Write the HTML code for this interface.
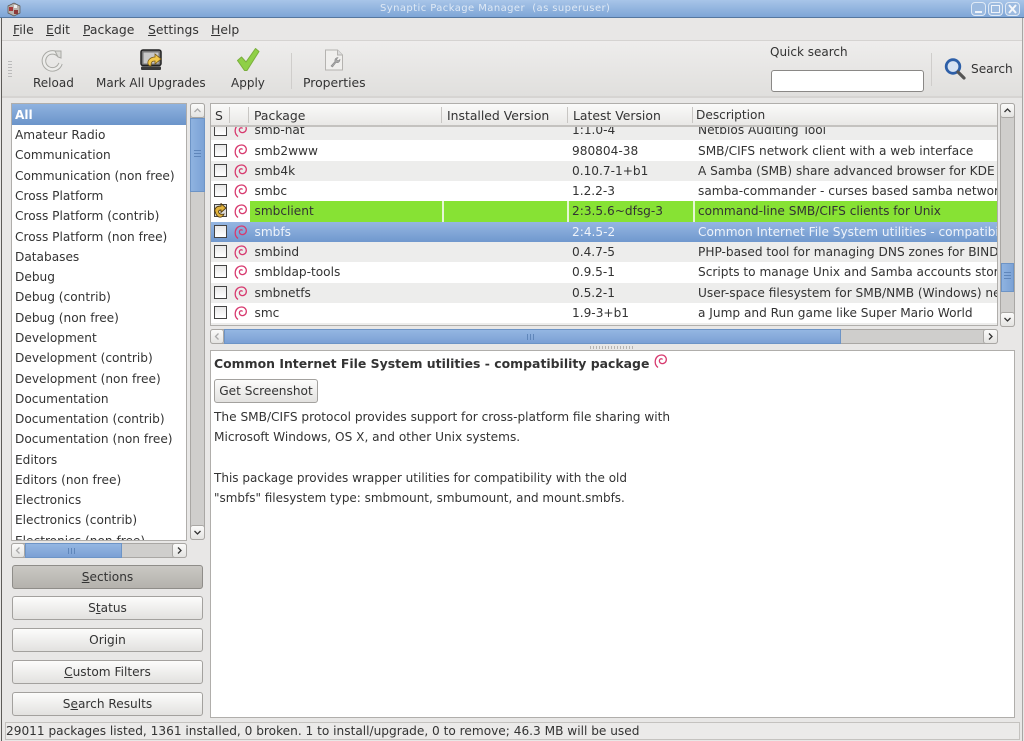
<!DOCTYPE html>
<html><head><meta charset="utf-8"><style>
html,body{margin:0;padding:0;background:#e8e7e6}
#w{position:relative;width:1024px;height:741px;overflow:hidden;background:#e8e7e6;font:12.15px/20px "DejaVu Sans",sans-serif;color:#333;filter:blur(.3px)}
#w div,#w svg{position:absolute;box-sizing:border-box}
.t{white-space:nowrap}
u{text-decoration:underline}
.m{font-size:12.4px}
.tb{font-size:12px}
.sb{border:1px solid #a9a7a4;background:#cfcecc;border-radius:3px}
.th{background:linear-gradient(90deg,#8fb3e0,#7ba2d6);border:1px solid #6d94c6}
.thh{background:linear-gradient(#94b6e2,#7ba0d4);border:1px solid #6d94c6}
.ab{background:linear-gradient(#fbfbfa,#e4e3e1);border:1px solid #a9a7a4;border-radius:3px}
.btn{left:12px;width:191px;height:24px;border:1px solid #a3a19e;border-radius:3px;background:linear-gradient(#fcfcfb,#e2e1df);text-align:center;line-height:23px}
.sec{left:0;width:174px;height:20px;padding-left:3px;line-height:22px}
.r{left:0;width:787px;height:20.3px;line-height:20px}
.c{width:13px;height:13px;left:3px;top:3px;border:1px solid #444;background:linear-gradient(#e8e8e8,#fff)}
.p{left:43.5px}.v{left:361px}.d{left:487px;width:300px;overflow:hidden}
.sw{left:22px;top:2px;width:15px;height:16px}
.h{top:0;line-height:23px;font-size:12.4px}
.s{top:3px;width:1px;height:16px;background:#c8c6c3}
</style></head><body><div id="w">
<svg width="0" height="0" style="display:none"><defs><symbol id="sw" viewBox="0 0 15 16"><path d="M5 14.5C2.500 12.500 1.800 9.500 2.400 7 3.200 3.500 6 2 8.500 2 11.500 2 13.500 4.200 13.300 7 13 9.700 10.500 11 8.500 10.500 6.500 10 5.800 8 6.800 6.500 7.500 5.500 9 5.500 9.500 6.500" fill="none" stroke="#d7396e" stroke-width="1.300"/></symbol></defs></svg>

<!-- window frame + title -->
<div style="left:0;top:0;width:1024px;height:18px;background:linear-gradient(#a8c5e8,#7ea5d6);border-bottom:1px solid #55779f"></div>
<svg style="left:6px;top:2px" width="16" height="15" viewBox="0 0 16 15"><path d="M2 4l6-3 6 3v7l-6 3-6-3z" fill="#b9b4ae" stroke="#5a5450" stroke-width=".7"/><rect x="3" y="5" width="4" height="4" fill="#a83a3a"/><rect x="8" y="8" width="4" height="4" fill="#8b3a3a"/><rect x="8" y="3" width="3" height="3" fill="#eee"/></svg>
<div class="t" style="left:380px;top:0;height:18px;line-height:18px;font-size:10px;letter-spacing:.42px;color:#dfe9f5">Synaptic Package Manager&nbsp; (as superuser)</div>
<div style="left:971px;top:2px;width:15px;height:14px;border:1px solid #dfe9f5;border-radius:4px;background:#9dbbe0"></div>
<div style="left:975px;top:11px;width:7px;height:2px;background:#eef3fa"></div>
<div style="left:988px;top:2px;width:15px;height:14px;border:1px solid #dfe9f5;border-radius:4px;background:#9dbbe0"></div>
<div style="left:991px;top:5px;width:9px;height:8px;border:1px solid #eef3fa"></div>
<div style="left:1005px;top:2px;width:15px;height:14px;border:1px solid #dfe9f5;border-radius:4px;background:#9dbbe0"></div>
<svg style="left:1005px;top:2px" width="15" height="14"><path d="M4 3l7 8M11 3l-7 8" stroke="#f4f7fb" stroke-width="2"/></svg>
<div style="left:1px;top:18px;width:1px;height:723px;background:#5d5b58"></div>
<div style="left:1022px;top:18px;width:1px;height:723px;background:#a8a6a3"></div>

<!-- menu -->
<div class="t m" style="left:13px;top:20px"><u>F</u>ile</div>
<div class="t m" style="left:46px;top:20px"><u>E</u>dit</div>
<div class="t m" style="left:83px;top:20px"><u>P</u>ackage</div>
<div class="t m" style="left:148px;top:20px"><u>S</u>ettings</div>
<div class="t m" style="left:211px;top:20px"><u>H</u>elp</div>

<!-- toolbar -->
<div style="left:2px;top:40px;width:1020px;height:58px;background:linear-gradient(#eeedec,#e0dfdd);border-top:1px solid #d5d3d1;border-bottom:2px solid #d6d4d2"></div>
<div style="left:8px;top:61px;width:4px;height:16px;background:repeating-linear-gradient(#bbb 0 1px,transparent 1px 3px)"></div>
<svg style="left:41px;top:48px" width="24" height="24" viewBox="0 0 24 24"><path d="M18 7.500A8.500 8.500 0 1 0 19.500 15.500" fill="none" stroke="#a8a8a4" stroke-width="4.500"/><path d="M18 7.500A8.500 8.500 0 1 0 19.500 15.500" fill="none" stroke="#ececea" stroke-width="2.600"/><path d="M14 3l6 0 0 7-3-1z" fill="#dcdcd9" stroke="#a8a8a4"/></svg>
<svg style="left:140px;top:49px" width="23" height="22" viewBox="0 0 23 22"><rect x="1" y="1" width="20" height="15.500" rx="2" fill="#777" stroke="#222" stroke-width="1.500"/><rect x="3.500" y="3.500" width="15" height="11" fill="#c9c9c9"/><rect x="1" y="17.500" width="20" height="3.500" rx="1" fill="#3a3a3a"/><path d="M8 15c-1-4 3-7 7-7V5l6 5-6 5v-3c-3 0-4 1-4 5-2 0-2.500-1-3-2z" fill="#f2c84b" stroke="#7a5a14" stroke-width=".8"/></svg>
<svg style="left:236px;top:47px" width="24" height="25" viewBox="0 0 24 25"><path d="M1.500 13.500l4-3.500 4.500 5L19.500 1.500l3.500 3-12 19h-2.500z" fill="#8fd046" stroke="#7aae3c" stroke-width="1" stroke-linejoin="round"/></svg>
<div style="left:291px;top:53px;width:1px;height:36px;background:#cfcdcb"></div>
<svg style="left:324px;top:49px" width="20" height="22" viewBox="0 0 20 22"><path d="M1.500 1h12l5 5v15h-17z" fill="#f0efed" stroke="#b5b3b0"/><path d="M13.500 1v5h5" fill="#ddd" stroke="#b5b3b0"/><path d="M7 17l4-4.500a3 3 0 0 1 3-4l-1.500 2 1.500 1.500 2-1.500a3 3 0 0 1-4 3l-3.500 4.500z" fill="#aaa" stroke="#888" stroke-width=".6"/></svg>
<div class="t tb" style="left:33px;top:73px">Reload</div>
<div class="t tb" style="left:96px;top:73px">Mark All Upgrades</div>
<div class="t tb" style="left:231px;top:73px">Apply</div>
<div class="t m" style="left:303px;top:73px">Properties</div>
<div class="t tb" style="left:770px;top:42px">Quick search</div>
<div style="left:771px;top:70px;width:153px;height:22px;background:#fff;border:1px solid #8a8886;border-radius:3px"></div>
<div style="left:931px;top:53px;width:1px;height:33px;background:#cfcdcb"></div>
<svg style="left:944px;top:57px" width="22" height="23" viewBox="0 0 22 23"><circle cx="9" cy="9.500" r="6.800" fill="#d6e2f2" stroke="#2d5fa8" stroke-width="2.800"/><path d="M14 15l6 6" stroke="#555" stroke-width="3.200" stroke-linecap="round"/></svg>
<div class="t" style="left:971px;top:59px">Search</div>

<!-- sidebar list -->
<div style="left:11px;top:103px;width:176px;height:438px;border:1px solid #b0aeab;background:#fff;overflow:hidden">
<div class="sec" style="top:0;height:21px;background:linear-gradient(#8fb2df,#6b94c9);color:#fff;font-weight:bold">All</div>
<div class="sec t" style="top:20.3px">Amateur Radio</div>
<div class="sec t" style="top:40.2px">Communication</div>
<div class="sec t" style="top:60.6px">Communication (non free)</div>
<div class="sec t" style="top:81px">Cross Platform</div>
<div class="sec t" style="top:101.3px">Cross Platform (contrib)</div>
<div class="sec t" style="top:121.5px">Cross Platform (non free)</div>
<div class="sec t" style="top:141.9px">Databases</div>
<div class="sec t" style="top:162.2px">Debug</div>
<div class="sec t" style="top:182.4px">Debug (contrib)</div>
<div class="sec t" style="top:202.7px">Debug (non free)</div>
<div class="sec t" style="top:223px">Development</div>
<div class="sec t" style="top:243.2px">Development (contrib)</div>
<div class="sec t" style="top:263.5px">Development (non free)</div>
<div class="sec t" style="top:283.8px">Documentation</div>
<div class="sec t" style="top:304px">Documentation (contrib)</div>
<div class="sec t" style="top:324.3px">Documentation (non free)</div>
<div class="sec t" style="top:344.6px">Editors</div>
<div class="sec t" style="top:364.9px">Editors (non free)</div>
<div class="sec t" style="top:385.1px">Electronics</div>
<div class="sec t" style="top:405.4px">Electronics (contrib)</div>
<div class="sec t" style="top:425.7px">Electronics (non free)</div>
</div>
<!-- sidebar vscroll -->
<div class="sb" style="left:190px;top:103px;width:15px;height:437px"></div>
<div class="ab" style="left:190px;top:103px;width:15px;height:15px"></div>
<svg style="left:190px;top:103px" width="15" height="15"><path d="M4.500 9l3-3 3 3" fill="none" stroke="#aaa" stroke-width="1.300"/></svg>
<div class="th" style="left:190px;top:118px;width:15px;height:74px"></div>
<div style="left:194px;top:150px;width:7px;height:8px;background:repeating-linear-gradient(#5f86ba 0 1px,transparent 1px 3px)"></div>
<div class="ab" style="left:190px;top:525px;width:15px;height:15px"></div>
<svg style="left:190px;top:525px" width="15" height="15"><path d="M4.500 6l3 3 3-3" fill="none" stroke="#333" stroke-width="1.300"/></svg>
<!-- sidebar hscroll -->
<div class="sb" style="left:11px;top:543px;width:176px;height:15px"></div>
<div class="ab" style="left:11px;top:543px;width:14px;height:15px"></div>
<svg style="left:11px;top:543px" width="14" height="15"><path d="M8.500 4.500l-3 3 3 3" fill="none" stroke="#aaa" stroke-width="1.300"/></svg>
<div class="thh" style="left:25px;top:543px;width:97px;height:15px"></div>
<div style="left:68px;top:548px;width:8px;height:6px;background:repeating-linear-gradient(90deg,#5f86ba 0 1px,transparent 1px 3px)"></div>
<div class="ab" style="left:172px;top:543px;width:15px;height:15px"></div>
<svg style="left:172px;top:543px" width="15" height="15"><path d="M6 4.500l3 3-3 3" fill="none" stroke="#333" stroke-width="1.300"/></svg>

<!-- filter buttons -->
<div class="btn" style="top:565px;background:linear-gradient(#c9c7c3,#b4b1ac);border-color:#8f8d89"><u>S</u>ections</div>
<div class="btn" style="top:596px">S<u>t</u>atus</div>
<div class="btn" style="top:628px">Origin</div>
<div class="btn" style="top:660px"><u>C</u>ustom Filters</div>
<div class="btn" style="top:692px">S<u>e</u>arch Results</div>

<!-- package list -->
<div style="left:210px;top:103px;width:788px;height:223px;border:1px solid #b0aeab;background:#fff;overflow:hidden">
<div style="left:0;top:0;width:787px;height:23px;background:linear-gradient(#fafaf9,#e9e8e6);border-bottom:2px solid #c4c2bf;z-index:3">
<div class="t h" style="left:4px">S</div><div class="s" style="left:18px"></div><div class="s" style="left:37px"></div>
<div class="t h" style="left:43px">Package</div><div class="s" style="left:230px"></div>
<div class="t h" style="left:236px">Installed Version</div><div class="s" style="left:356px"></div>
<div class="t h" style="left:362px">Latest Version</div><div class="s" style="left:481px"></div>
<div class="t h" style="left:485px;font-size:12.15px">Description</div>
</div>
<div class="r t" style="top:16.2px;background:#ededec"><div class="c"></div><svg class="sw"><use href="#sw"/></svg><div class="p">smb-nat</div><div class="v">1:1.0-4</div><div class="d">Netbios Auditing Tool</div></div>
<div class="r t" style="top:36.5px;background:#fff"><div class="c"></div><svg class="sw"><use href="#sw"/></svg><div class="p">smb2www</div><div class="v">980804-38</div><div class="d">SMB/CIFS network client with a web interface</div></div>
<div class="r t" style="top:56.8px;background:#ededec"><div class="c"></div><svg class="sw"><use href="#sw"/></svg><div class="p">smb4k</div><div class="v">0.10.7-1+b1</div><div class="d">A Samba (SMB) share advanced browser for KDE</div></div>
<div class="r t" style="top:77.1px;background:#fff"><div class="c"></div><svg class="sw"><use href="#sw"/></svg><div class="p">smbc</div><div class="v">1.2.2-3</div><div class="d">samba-commander - curses based samba network</div></div>
<div class="r t" style="top:97.4px;background:#fff">
<div style="left:39px;top:0;width:748px;height:20.3px;background:#87e234"></div>
<div style="left:231px;top:0;width:2px;height:20.3px;background:#e6f6d4"></div><div style="left:356px;top:0;width:2px;height:20.3px;background:#e6f6d4"></div><div style="left:482px;top:0;width:2px;height:20.3px;background:#e6f6d4"></div>
<div class="c" style="background:#ddd"></div>
<svg style="left:1px;top:2px" width="17" height="16" viewBox="0 0 17 16"><path d="M3 9c-1-4 2-6 6-6V.5l5 4.500-5 4.500V7c-2 0-3 1-2 3 1 1.500 3 1.500 5 1-1 2.500-3 3.500-5 3-2-.5-3-2-4-5.500z" fill="#e2b33c" stroke="#4f3a10" stroke-width=".9"/></svg>
<svg class="sw"><use href="#sw"/></svg><div class="p">smbclient</div><div class="v">2:3.5.6~dfsg-3</div><div class="d">command-line SMB/CIFS clients for Unix</div></div>
<div class="r t" style="top:117.7px;background:linear-gradient(#95b6e1,#7098cd);color:#eef3fa"><div class="c" style="border-color:#444"></div><svg class="sw"><use href="#sw"/></svg><div class="p">smbfs</div><div class="v">2:4.5-2</div><div class="d">Common Internet File System utilities - compatibility package</div></div>
<div class="r t" style="top:138px;background:#ededec"><div class="c"></div><svg class="sw"><use href="#sw"/></svg><div class="p">smbind</div><div class="v">0.4.7-5</div><div class="d">PHP-based tool for managing DNS zones for BIND</div></div>
<div class="r t" style="top:158.2px;background:#fff"><div class="c"></div><svg class="sw"><use href="#sw"/></svg><div class="p">smbldap-tools</div><div class="v">0.9.5-1</div><div class="d">Scripts to manage Unix and Samba accounts stored</div></div>
<div class="r t" style="top:178.5px;background:#ededec"><div class="c"></div><svg class="sw"><use href="#sw"/></svg><div class="p">smbnetfs</div><div class="v">0.5.2-1</div><div class="d">User-space filesystem for SMB/NMB (Windows) network</div></div>
<div class="r t" style="top:198.8px;background:#fff"><div class="c"></div><svg class="sw"><use href="#sw"/></svg><div class="p">smc</div><div class="v">1.9-3+b1</div><div class="d">a Jump and Run game like Super Mario World</div></div>
<div class="r" style="top:219px;height:4px;background:#ededec"></div>
</div>
<!-- list vscroll -->
<div class="sb" style="left:1000px;top:103px;width:15px;height:224px"></div>
<div class="ab" style="left:1000px;top:103px;width:15px;height:15px"></div>
<svg style="left:1000px;top:103px" width="15" height="15"><path d="M4.500 9l3-3 3 3" fill="none" stroke="#333" stroke-width="1.300"/></svg>
<div class="th" style="left:1001px;top:263px;width:13px;height:29px"></div>
<div style="left:1004px;top:272px;width:7px;height:8px;background:repeating-linear-gradient(#5f86ba 0 1px,transparent 1px 3px)"></div>
<div class="ab" style="left:1000px;top:312px;width:15px;height:15px"></div>
<svg style="left:1000px;top:312px" width="15" height="15"><path d="M4.500 6l3 3 3-3" fill="none" stroke="#333" stroke-width="1.300"/></svg>
<!-- list hscroll -->
<div class="sb" style="left:210px;top:329px;width:788px;height:15px"></div>
<div class="ab" style="left:210px;top:329px;width:14px;height:15px"></div>
<svg style="left:210px;top:329px" width="14" height="15"><path d="M8.500 4.500l-3 3 3 3" fill="none" stroke="#aaa" stroke-width="1.300"/></svg>
<div class="thh" style="left:224px;top:329px;width:617px;height:15px"></div>
<div style="left:527px;top:334px;width:8px;height:6px;background:repeating-linear-gradient(90deg,#5f86ba 0 1px,transparent 1px 3px)"></div>
<div class="ab" style="left:983px;top:329px;width:15px;height:15px"></div>
<svg style="left:983px;top:329px" width="15" height="15"><path d="M6 4.500l3 3-3 3" fill="none" stroke="#333" stroke-width="1.300"/></svg>
<div style="left:590px;top:346px;width:44px;height:3px;background:repeating-linear-gradient(90deg,#b5b3b0 0 1px,transparent 1px 3px)"></div>

<!-- details -->
<div style="left:210px;top:350px;width:805px;height:368px;background:#fff;border:1px solid #b0aeab"></div>
<div class="t" style="left:214px;top:354px;font-weight:bold;font-size:12.44px">Common Internet File System utilities - compatibility package</div>
<svg style="left:653px;top:353px" width="15" height="16"><use href="#sw"/></svg>
<div style="left:214px;top:379px;width:104px;height:24px;border:1px solid #a3a19e;border-radius:3px;background:linear-gradient(#fcfcfb,#e2e1df);text-align:center;line-height:22px" class="t">Get Screenshot</div>
<div class="t" style="left:214px;top:407px">The SMB/CIFS protocol provides support for cross-platform file sharing with</div>
<div class="t" style="left:214px;top:427px">Microsoft Windows, OS X, and other Unix systems.</div>
<div class="t" style="left:214px;top:468px;font-size:12.03px">This package provides wrapper utilities for compatibility with the old</div>
<div class="t" style="left:214px;top:488px;font-size:11.97px">"smbfs" filesystem type: smbmount, smbumount, and mount.smbfs.</div>

<!-- status -->
<div style="left:5px;top:722px;width:1015px;height:18px;border:1px solid #c4c2bf;background:#ebeae9"></div>
<div class="t" style="left:6px;top:721px">29011 packages listed, 1361 installed, 0 broken. 1 to install/upgrade, 0 to remove; 46.3 MB will be used</div>
</div></body></html>
